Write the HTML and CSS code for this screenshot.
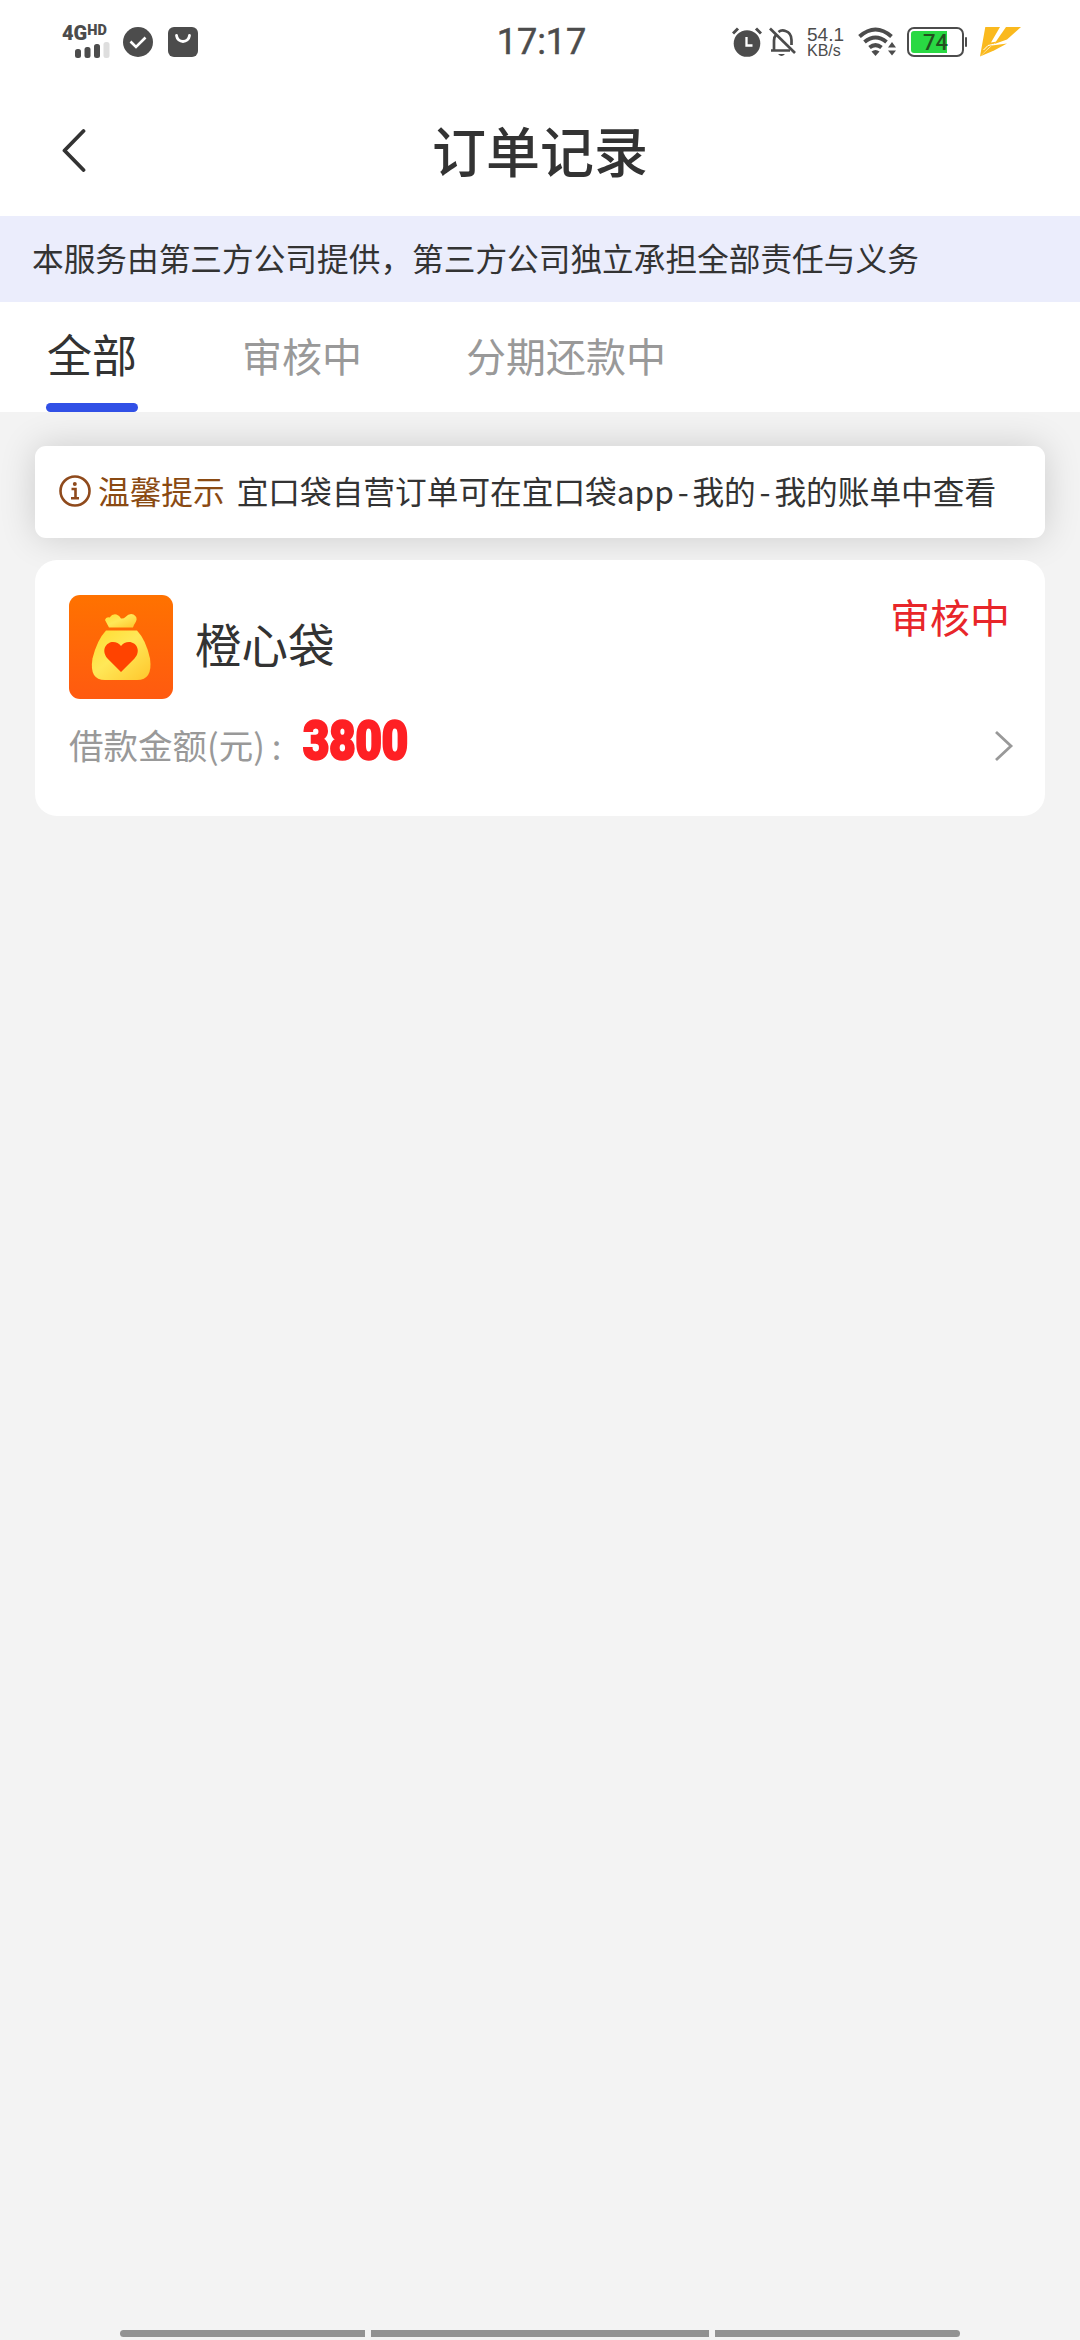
FILE: index.html
```html
<!DOCTYPE html>
<html lang="zh-CN">
<head>
<meta charset="utf-8">
<title>订单记录</title>
<link rel="stylesheet" href="styles.css">
</head>
<body>
<div class="screen">
  <header class="status-bar">
    <div class="status-left">
      <div class="network">
        <div class="network-type">4G<span class="network-hd">HD</span></div>
        <svg class="signal" width="35" height="16" viewBox="0 0 35 16">
          <g fill="#4c4c4c"><rect x="0" y="7" width="6" height="9" rx="2.5"/><rect x="9.500" y="5" width="6" height="11" rx="2.5"/><rect x="19" y="2" width="6" height="14" rx="2.500"/></g>
          <rect x="28.500" y="0" width="6" height="16" rx="2.500" fill="#dedede"/>
        </svg>
      </div>
      <svg width="30" height="30" viewBox="0 0 30 30"><circle cx="15" cy="15" r="15" fill="#4c4c4c"/><path d="M7.500 14.500l5.500 5.500 9.500-9.500" fill="none" stroke="#fff" stroke-width="2.600"/></svg>
      <svg width="30" height="30" viewBox="0 0 30 30"><rect width="30" height="30" rx="6" fill="#4c4c4c"/><path d="M8.500 8.500c1 8 12 8 13 0" fill="none" stroke="#fff" stroke-width="2.800" stroke-linecap="round"/></svg>
    </div>
    <div class="clock">17:17</div>
    <div class="status-right">
      <svg class="alarm" width="30" height="30" viewBox="0 0 30 30"><circle cx="15" cy="16.500" r="13.300" fill="#4c4c4c"/><path d="M1 6.500l5-5M29 6.500l-5-5" stroke="#4c4c4c" stroke-width="3"/><path d="M14.500 10v8.500h6" fill="none" stroke="#fff" stroke-width="2.300"/></svg>
      <svg class="bell" width="28" height="30" viewBox="0 0 28 30"><path d="M2 23.500h19M5 23V13.500q0-3.500 2-5.500M9.500 5q3-2.500 7-1 6 2 6 9v5" fill="none" stroke="#4c4c4c" stroke-width="2.700"/><path d="M1 1.500l25 24.500" stroke="#4c4c4c" stroke-width="2.700"/><path d="M9 27h7q-3.500 4-7 0z" fill="#4c4c4c"/></svg>
      <div class="speed"><div class="speed-value">54.1</div><div class="speed-unit">KB/s</div></div>
      <svg class="wifi" width="38" height="30" viewBox="0 0 38 30"><g fill="none" stroke="#4c4c4c" stroke-width="4"><path d="M1.500 9.500Q17.500-4.500 33.500 9.500"/><path d="M6.500 15Q17.500 6 28.500 15"/><path d="M11.500 20.500Q17.500 15.800 23.500 20.500"/></g><path d="M13.500 24.500q4-3 8 0l-4 4.500z" fill="#4c4c4c"/><path d="M30 20.500l4-5.500 4 5.500zM30 23.500l4 5 4-5z" fill="#4c4c4c"/></svg>
      <div class="battery"><div class="battery-level"></div><span class="battery-text">74</span></div>
      <svg class="flash" width="42" height="30" viewBox="0 0 42 30"><g fill="#fab91e"><path d="M6.300 0H21l-9 15.500 6-1L9.500 21 1 29.500z"/><path d="M27 0h15L28 12.500 15.500 17 18 13z"/><path d="M28 16.500L15 23.500 1 29.500 13 18.500z"/></g><path d="M4.500 23L9 18.500l5.500-1.200" fill="none" stroke="#fff" stroke-width="1"/></svg>
    </div>
  </header>

  <nav class="title-bar">
    <svg class="back" width="26" height="44" viewBox="0 0 26 44"><path d="M23.500 3L4.500 22.500 23.500 42" fill="none" stroke="#333" stroke-width="3.800" stroke-linecap="round" stroke-linejoin="round"/></svg>
    <h1 class="title">订单记录</h1>
  </nav>

  <p class="notice">本服务由第三方公司提供，第三方公司独立承担全部责任与义务</p>

  <div class="tabs">
    <div class="tab tab-active">全部</div>
    <div class="tab">审核中</div>
    <div class="tab">分期还款中</div>
  </div>

  <main class="content">
    <section class="tip">
      <svg class="tip-icon" width="32" height="32" viewBox="0 0 32 32"><circle cx="16" cy="16" r="14.500" fill="none" stroke="#8f4a1c" stroke-width="2.600"/><circle cx="15.800" cy="9" r="2" fill="#8f4a1c"/><path d="M12.500 14h4v9M12 23.300h8" fill="none" stroke="#8f4a1c" stroke-width="2.600"/></svg>
      <span class="tip-label">温馨提示</span>
      <span class="tip-text">宜口袋自营订单可在宜口袋app<span class="dash">-</span>我的<span class="dash">-</span>我的账单中查看</span>
    </section>

    <section class="order">
      <div class="order-head">
        <svg class="order-logo" width="104" height="104" viewBox="0 0 104 104">
          <defs>
            <linearGradient id="bg" x1="0" y1="0" x2="0" y2="1"><stop offset="0" stop-color="#ff7200"/><stop offset="1" stop-color="#ff5a10"/></linearGradient>
            <linearGradient id="gold" x1="0" y1="0" x2="1" y2="1"><stop offset="0" stop-color="#ffdc2e"/><stop offset=".45" stop-color="#ffe858"/><stop offset="1" stop-color="#ffc62c"/></linearGradient>
          </defs>
          <rect width="104" height="104" rx="11" fill="url(#bg)"/>
          <path d="M40 32.500L36 25q1-3.500 4.500-2.500 3-4 7-3 3 1 4.500 4 2.500.5 4.500-1.500 4-4.500 8-2.500 4.500 2.500 2.500 7-2 3-3 6z" fill="url(#gold)"/>
          <path d="M37 35.500h31Q77 45 81 63.500q3 21.500-13 21.500H36Q20 85 23.500 63.500 28 45 37 35.500z" fill="url(#gold)"/>
          <path d="M52 77L38.500 63.500c-7-8.500-1-16.500 5.500-16.500q5 0 8 4 3-4 8-4c7.500 0 12.500 9 5.500 16.500z" fill="#ff4300"/>
        </svg>
        <h2 class="order-name">橙心袋</h2>
        <span class="order-status">审核中</span>
      </div>
      <div class="order-row">
        <span class="order-label">借款金额(元)</span><span class="order-colon">:</span>
        <span class="amount">3800</span>
        <svg class="chevron" width="20" height="32" viewBox="0 0 20 32"><path d="M2 2l15 14L2 30" fill="none" stroke="#999" stroke-width="2.800"/></svg>
      </div>
    </section>
  </main>

  <footer class="gesture-bar"><i class="grip grip-left"></i><i class="grip grip-mid"></i><i class="grip grip-right"></i></footer>
</div>
</body>
</html>
```
FILE: styles.css
```css
* { box-sizing: border-box; }
body { margin: 0; background: #f3f3f3; font-family: "Noto Sans CJK SC", sans-serif; color: #333; }
h1, h2, p { margin: 0; font-weight: 400; }
svg { display: block; flex: none; }
.screen { width: 1080px; height: 2340px; display: flex; flex-direction: column; white-space: nowrap; overflow: hidden; }

.status-bar { height: 84px; flex: none; background: #fff; display: grid; grid-template-columns: 1fr 90px 1fr; align-items: center; padding: 0 59px 0 62px; color: #4c4c4c; }
.status-left { display: flex; align-items: center; gap: 15px; }
.network { width: 46px; height: 34px; display: flex; flex-direction: column; justify-content: space-between; }
.network-type { display: flex; align-items: flex-start; font: 900 20px/16px Roboto, sans-serif; height: 16px; }
.network-hd { font-size: 14.500px; line-height: 11px; }
.signal { margin-left: 13px; margin-bottom: 1px; }
.clock { font: 400 36px/44px Roboto, sans-serif; text-align: center; -webkit-text-stroke: .5px #4c4c4c; }
.status-right { display: flex; align-items: center; justify-content: flex-end; }
.bell { margin-left: 7px; }
.speed { width: 36px; margin-left: 10px; font-family: "Liberation Sans", sans-serif; display: flex; flex-direction: column; gap: 2px; }
.speed-value { font-size: 19px; line-height: 15px; }
.speed-unit { font-size: 16px; line-height: 14px; }
.wifi { margin-left: 15px; }
.battery { width: 57px; height: 30px; margin-left: 11px; border: 2.500px solid #4c4c4c; border-radius: 7px; position: relative; display: flex; align-items: center; padding: 2px; }
.battery::after { content: ""; position: absolute; right: -5px; top: 8px; width: 2px; height: 10px; border-radius: 1px; background: #4c4c4c; }
.battery-level { width: 36px; height: 22px; border-radius: 3px 0 0 3px; background: #29d943; }
.battery-text { position: absolute; left: 14px; top: 2px; font: 500 22px/24px Roboto, sans-serif; color: #23511f; }
.flash { margin-left: 15px; }

.title-bar { height: 132px; flex: none; background: #fff; display: grid; grid-template-columns: 60px 1fr 60px; align-items: center; padding: 0 60px; }
.title { font-size: 54px; line-height: 64px; font-weight: 500; text-align: center; }
.notice { height: 86px; flex: none; background: #ebedfc; padding: 0 32px; font-size: 31.680px; line-height: 82px; }

.tabs { height: 110px; flex: none; background: #fff; display: flex; padding-left: 46px; gap: 104px; }
.tab { height: 110px; font-size: 40px; line-height: 107px; color: #999; }
.tab-active { width: 92px; font-size: 45px; line-height: 103px; text-align: center; color: #333; display: flex; flex-direction: column; }
.tab-active::after { content: ""; flex: none; height: 9px; margin-top: -2px; border-radius: 4.500px; background: #3150e6; }

.content { flex: 1; padding: 34px 35px 0; display: flex; flex-direction: column; gap: 22px; }
.tip { height: 92px; background: #fff; border-radius: 11px; box-shadow: 0 0 36px rgba(0, 0, 0, .16); padding-left: 24px; display: flex; align-items: center; font-size: 31.680px; line-height: 46px; }
.tip-icon { margin-top: -2px; }
.tip-label { margin: -5px 0 0 7px; color: #8a4a12; }
.tip-text { margin: -5px 0 0 12px; }
.dash { margin: 0 3.800px; }

.order { height: 256px; background: #fff; border-radius: 22px; padding: 35px 31px 0 34px; }
.order-head { display: flex; height: 104px; }
.order-name { margin-left: 22px; font-size: 46.500px; line-height: 96px; }
.order-status { margin: 0 4px 0 auto; font-size: 40px; line-height: 42px; color: #e8262a; }
.order-row { display: flex; align-items: center; height: 64px; margin-top: 15px; }
.order-label { font-size: 34.500px; line-height: 50px; margin-top: -5px; color: #999; }
.order-colon { width: 38px; padding-left: 7px; font-size: 34.500px; line-height: 50px; margin-top: -3px; color: #999; }
.amount { margin-top: -10px; font: 900 54px/60px Roboto, sans-serif; color: #fe2024; -webkit-text-stroke: 2.500px #fe2024; transform: scaleX(.84); transform-origin: left; }
.chevron { margin-left: auto; }

.gesture-bar { height: 10px; flex: none; display: flex; justify-content: center; gap: 6px; }
.grip { height: 7px; width: 245px; background: #929292; }
.grip-mid { width: 338px; }
.grip-left { border-radius: 4px 0 0 4px; }
.grip-right { border-radius: 0 4px 4px 0; }
```
